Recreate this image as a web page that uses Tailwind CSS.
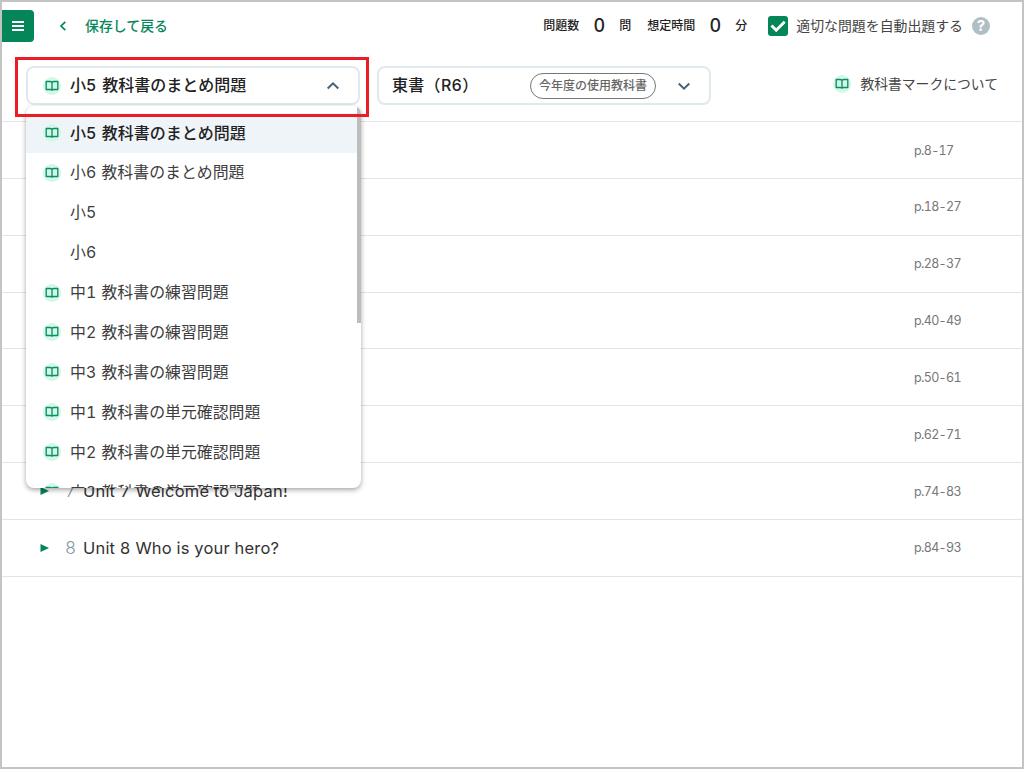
<!DOCTYPE html>
<html lang="ja">
<head>
  <meta charset="UTF-8">
  <meta name="viewport" content="width=device-width, initial-scale=1.0">
  <title>問題選択</title>
  <script src="https://cdn.jsdelivr.net/npm/@tailwindcss/browser@4"></script>
</head>
<body class="bg-white text-[#333] font-['Inter','Noto_Sans_CJK_JP',sans-serif] tabular-nums">
  <!-- shared icons -->
  <svg class="hidden">
    <symbol id="book" viewBox="0 0 18 18">
      <circle cx="9" cy="9" r="9" fill="#d3f7e9"/>
      <path d="M9 5.200v7.600M9 5.200C8.500 4.700 7.900 4.500 7 4.500H3.200v8h4c.8 0 1.400.2 1.800.7.400-.5 1-.7 1.800-.7h4V4.500H11C10.100 4.500 9.500 4.700 9 5.200z" fill="none" stroke="#0b8f61" stroke-width="1.350" stroke-linejoin="round"/>
    </symbol>
    <symbol id="chevron" viewBox="0 0 14 14">
      <path d="M1.700 4.500L7 9.700l5.300-5.200" fill="none" stroke="#46637a" stroke-width="2"/>
    </symbol>
  </svg>

  <div class="relative w-[1024px] h-[769px] border-2 border-[#c4c4c4] overflow-hidden">
    <header class="h-[48px] flex items-center whitespace-nowrap">
      <button class="w-8 h-8 bg-[#048659] rounded-r flex flex-col items-center justify-center gap-[2px]">
        <span class="w-3 h-[2px] bg-white"></span>
        <span class="w-3 h-[2px] bg-white"></span>
        <span class="w-3 h-[2px] bg-white"></span>
      </button>
      <a class="ml-[23px] flex items-center text-[#048659] font-medium text-[13.9px]">
        <svg class="w-3 h-3 mr-[16px]" viewBox="0 0 12 12"><path d="M8.300 1.800L4 6l4.300 4.200" fill="none" stroke="#048659" stroke-width="1.700"/></svg>
        <span>保存して戻る</span>
      </a>
      <div class="ml-auto mr-[32px] flex items-center text-xs font-medium text-[#222]">
        <span>問題数</span>
        <span class="w-10 text-center text-lg">0</span>
        <span>問</span>
        <span class="ml-4">想定時間</span>
        <span class="w-10 text-center text-lg">0</span>
        <span>分</span>
        <span class="ml-[21px] w-5 h-5 rounded-[3px] bg-[#048659]">
          <svg viewBox="0 0 20 20"><path d="M3.500 9.500l4.700 4.700L16.700 5.800" fill="none" stroke="#fff" stroke-width="2.900"/></svg>
        </span>
        <span class="ml-2 text-[13.900px] font-normal text-[#444]">適切な問題を自動出題する</span>
        <span class="ml-[9px] w-[18px] h-[18px] rounded-full bg-[#b0bec5] text-white text-[15px] leading-[18px] font-bold text-center">?</span>
      </div>
    </header>

    <div class="h-[71px] flex pl-[24px] pr-6 pt-4 whitespace-nowrap">
      <div class="w-[334px] h-[39px] border-2 border-[#dfe9ee] rounded-lg flex items-center pl-[15px] pr-[18px] font-medium text-[#222]">
        <svg class="w-[18px] h-[18px] mr-[9px]"><use href="#book"/></svg>
        <span class="[word-spacing:1.500px] mb-px">小5 教科書のまとめ問題</span>
        <svg class="w-[14px] h-[14px] ml-auto rotate-180"><use href="#chevron"/></svg>
      </div>
      <div class="ml-[17px] w-[334px] h-[39px] border-2 border-[#dfe9ee] rounded-lg flex items-center pl-[13px] pr-[18px] font-medium text-[#222]">
        <span class="mb-px tracking-[0.300px]">東書（R6）</span>
        <span class="ml-auto mr-[21px] h-[26px] w-[126px] border border-[#777] rounded-full text-xs leading-6 text-center text-[#666]">今年度の使用教科書</span>
        <svg class="w-[14px] h-[14px]"><use href="#chevron"/></svg>
      </div>
      <a class="ml-auto h-9 flex items-center text-[13.800px] font-normal text-[#444]">
        <svg class="w-[18px] h-[18px] mr-[9px]"><use href="#book"/></svg>
        <span>教科書マークについて</span>
      </a>
    </div>

    <ul id="units" class="text-base border-t border-[#e0e5e7]"></ul>

    <!-- open course menu -->
    <div class="absolute left-[24px] top-[104px] w-[335px] h-[382px] bg-white rounded-lg shadow-[0_2px_5px_rgba(0,0,0,0.35)] overflow-hidden pt-[7px] whitespace-nowrap">
      <ul id="courses"></ul>
      <div class="absolute right-0 top-0 w-[4px] h-[217px] bg-[#bdbdbd]"></div>
    </div>

    <!-- highlight frame around the course select -->
    <div class="absolute left-[13px] top-[55px] w-[354px] h-[60px] border-3 border-[#ed1c24]"></div>
  </div>

  <script>
    const units = [
      ['', 'p.8-17'],
      ['', 'p.18-27'],
      ['', 'p.28-37'],
      ['', 'p.40-49'],
      ['', 'p.50-61'],
      ['', 'p.62-71'],
      ['Unit 7 Welcome to Japan!', 'p.74-83'],
      ['Unit 8 Who is your hero?', 'p.84-93'],
    ];
    document.getElementById('units').innerHTML = units.map(([title, pages], i) => `
      <li class="h-[56.850px] border-b border-[#e0e5e7] flex items-center pl-[38px]">
        ${title ? `<svg class="w-[9px] h-2 mr-4" viewBox="0 0 9 8"><path d="M0.500 0l8.500 4-8.500 4z" fill="#048659"/></svg>
        <span class="w-[18px] pt-px font-light text-[17px] text-[#7d95a3]">${i + 1}</span>
        <span class="pt-px text-[16.500px] tracking-[0.200px]">${title}</span>` : ''}
        <span class="ml-auto w-[108px] pt-0.5 text-[12.500px] tracking-[-0.650px] text-[#777]">${pages}</span>
      </li>`).join('');

    const courses = [
      '小5 教科書のまとめ問題', '小6 教科書のまとめ問題', '小5', '小6',
      '中1 教科書の練習問題', '中2 教科書の練習問題', '中3 教科書の練習問題',
      '中1 教科書の単元確認問題', '中2 教科書の単元確認問題', '中3 教科書の単元確認問題',
    ];
    document.getElementById('courses').innerHTML = courses.map((name, i) => `
      <li class="h-[39.900px] flex items-center pl-[17px] ${i ? 'text-[15.900px] text-[#3d3d3d]' : 'bg-[#eff4f8] font-medium text-[#222]'}">
        <svg class="w-[18px] h-[18px] mr-[9px]">${name.length > 2 ? '<use href="#book"/>' : ''}</svg>
        <span class="[word-spacing:1px] ${i ? 'pt-px' : ''}">${name}</span>
      </li>`).join('');
  </script>
</body>
</html>
